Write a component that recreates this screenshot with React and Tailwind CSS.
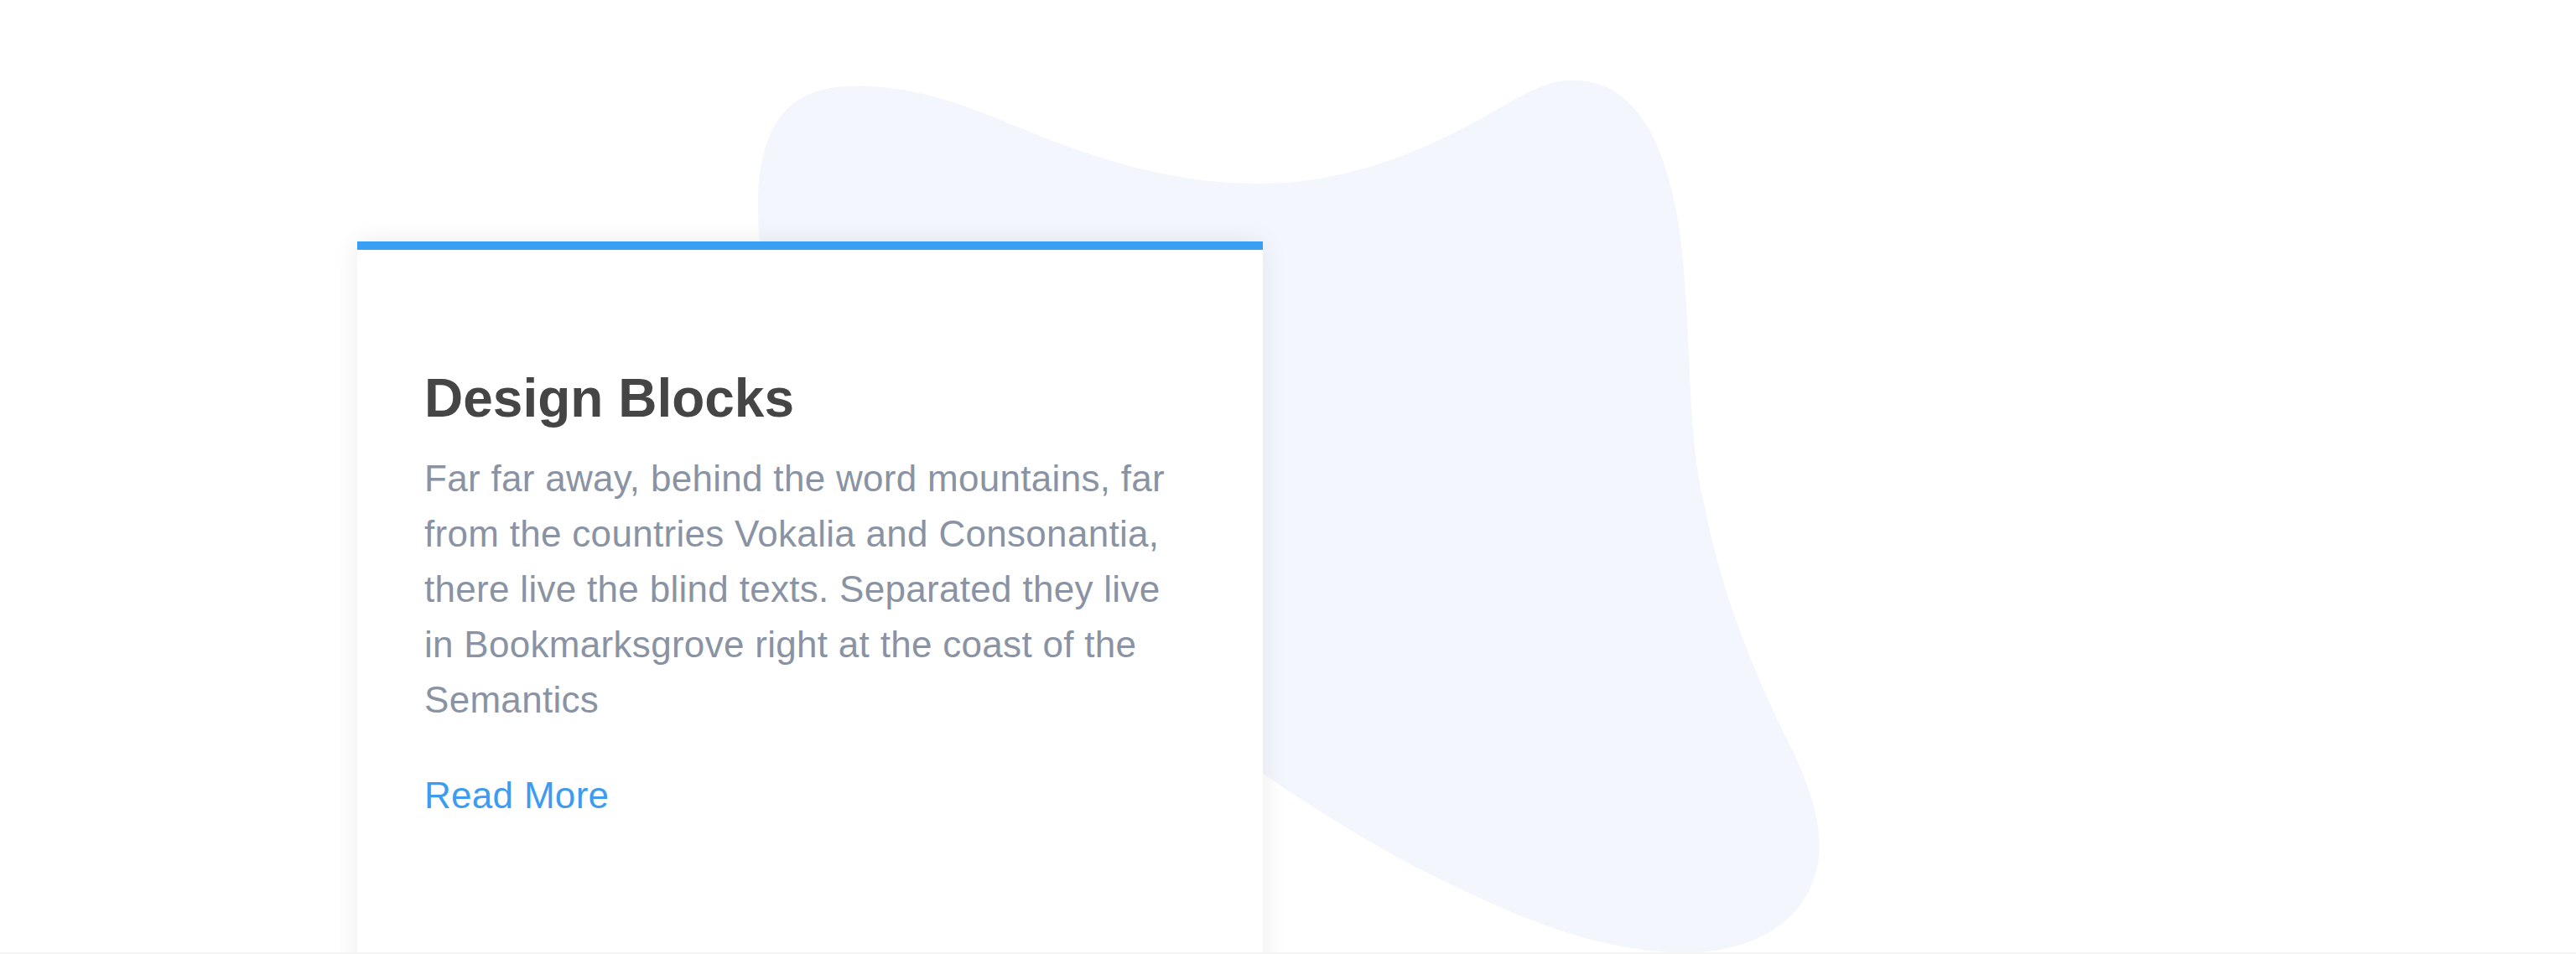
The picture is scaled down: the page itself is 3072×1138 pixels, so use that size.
import React from 'react';

const Blob = () => (
  <svg
    className="absolute inset-0 h-full w-full"
    viewBox="0 0 3072 1136"
    preserveAspectRatio="xMinYMin slice"
    aria-hidden="true"
  >
    <path
      fill="#f3f6fd"
      d="M 1011 103
         C 1090 100 1150 125 1230 158
         C 1320 195 1410 220 1505 219
         C 1610 218 1700 180 1790 128
         C 1830 104 1855 94 1880 96
         C 1950 98 1992 170 2006 300
         C 2018 420 2012 520 2032 600
         C 2055 720 2100 820 2140 900
         C 2175 975 2180 1030 2150 1075
         C 2120 1120 2060 1140 1990 1136
         C 1890 1130 1800 1090 1700 1040
         C 1500 940 1200 700 1000 520
         C 930 450 905 350 904 250
         C 903 150 940 105 1011 103 Z"
    />
  </svg>
);

const App = () => {
  return (
    <div className="w-full bg-white font-['Liberation_Sans',Arial,sans-serif]">
      {/* Section */}
      <section className="relative h-[1138px] overflow-hidden border-b-2 border-[#f4f4f5] bg-white">
        <Blob />

        <div className="relative pl-[426px] pt-[288px]">
          {/* Card */}
          <div className="h-[1000px] w-[1080px] border-t-[10px] border-[#389ff3] bg-white px-[80px] pt-[139px] shadow-[0_0_30px_rgba(0,0,0,0.08)]">
            <h3 className="text-[64px] font-bold leading-[77px] text-[#454545]">Design Blocks</h3>
            <p className="mt-6 max-w-[900px] text-[44px] leading-[66px] tracking-[0.3px] text-[#8a93a3]">
              Far far away, behind the word mountains, far from the countries Vokalia and Consonantia, there live the blind texts. Separated they live in Bookmarksgrove right at the coast of the Semantics
            </p>
            <a href="#" className="mt-12 block text-[44px] leading-[66px] tracking-[0.3px] text-[#3d9cf0]">
              Read More
            </a>
          </div>
        </div>
      </section>
    </div>
  );
};

export default App;
